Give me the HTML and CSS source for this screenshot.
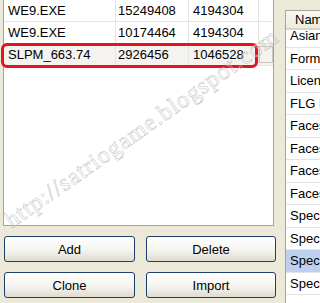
FILE: index.html
```html
<!DOCTYPE html>
<html lang="en">
<head>
    <meta charset="UTF-8">
    <title>Memory card files</title>
    <link rel="stylesheet" href="styles.css">
</head>
<body>
<div class="window">
    <div class="left-pane">
        <div class="file-list">
            <div class="file-row">
                <span class="cell name">WE9.EXE</span>
                <span class="cell size">15249408</span>
                <span class="cell alloc">4194304</span>
                <span class="cell extra"></span>
            </div>
            <div class="file-row">
                <span class="cell name">WE9.EXE</span>
                <span class="cell size">10174464</span>
                <span class="cell alloc">4194304</span>
                <span class="cell extra"></span>
            </div>
            <div class="file-row marked">
                <span class="cell name">SLPM_663.74</span>
                <span class="cell size">2926456</span>
                <span class="cell alloc">1046528</span>
                <span class="cell extra"></span>
            </div>
        </div>
        <div class="buttons">
            <button type="button">Add</button>
            <button type="button">Delete</button>
            <button type="button">Clone</button>
            <button type="button">Import</button>
        </div>
    </div>

    <div class="entry-pane">
        <div class="entry-head">Name</div>
        <div class="entry-body">
            <div class="entry-row clipped">Asian</div>
            <div class="entry-row">Forma</div>
            <div class="entry-row">Licen</div>
            <div class="entry-row">FLG F</div>
            <div class="entry-row">Faces</div>
            <div class="entry-row">Faces</div>
            <div class="entry-row">Faces</div>
            <div class="entry-row">Faces</div>
            <div class="entry-row">Speci</div>
            <div class="entry-row">Speci</div>
            <div class="entry-row selected">Speci</div>
            <div class="entry-row">Speci</div>
        </div>
    </div>
</div>

<div class="watermark">http://satriogame.blogspot.com</div>
</body>
</html>
```

FILE: styles.css
```css
body {
    margin: 0;
    width: 320px;
    height: 303px;
    overflow: hidden;
    position: relative;
    background-color: #ece9d8;
    font-family: "Liberation Sans", Arial, sans-serif;
    font-size: 13px;
    color: #000;
}

.window {
    display: flex;
    align-items: flex-start;
}

.left-pane {
    flex: none;
    width: 271px;
    padding-left: 3px;
}

.file-list {
    height: 226px;
    box-sizing: border-box;
    background-color: #fff;
    border: 1px solid #a5a49c;
    border-top: none;
}

.file-row {
    display: flex;
    height: 22px;
    box-sizing: border-box;
    border-bottom: 1px solid #e4e4e0;
    line-height: 21px;
    position: relative;
}

.cell {
    box-sizing: border-box;
    border-right: 1px solid #e4e4e0;
    white-space: nowrap;
}

.name {
    width: 112px;
    padding-left: 4px;
}

.size {
    width: 73px;
    padding-left: 2px;
}

.alloc {
    width: 70px;
    padding-left: 4px;
}

.extra {
    flex: 1;
    border-right: none;
}

.file-row.marked {
    background-color: #f4f3ef;
}

.file-row.marked .extra {
    margin: 2px 0;
    border: 1px solid #c9c8c0;
}

/* red annotation around the selected save */
.file-row.marked::after {
    content: "";
    position: absolute;
    left: -3px;
    top: -1px;
    width: 257px;
    height: 25px;
    box-sizing: border-box;
    border: 3px solid #e2141c;
    border-radius: 6px;
}

.buttons {
    display: grid;
    grid-template-columns: 131px 130px;
    gap: 10px 11px;
    margin-top: 10px;
    padding-left: 1px;
}

button {
    height: 26px;
    border: 1px solid #1c3f6e;
    border-radius: 3px;
    background: linear-gradient(#ffffff, #f5f4ee 55%, #dedbd0);
    font-family: "Liberation Sans", Arial, sans-serif;
    font-size: 13px;
    color: #000;
    padding: 0;
}

.entry-pane {
    flex: none;
    width: 34px;
    height: 300px;
    margin-left: 11px;
    margin-top: 10px;
    background-color: #fff;
    border: 1px solid #a5a49c;
    border-right: none;
    overflow: hidden;
}

.entry-head {
    height: 19px;
    box-sizing: border-box;
    padding-left: 9px;
    line-height: 18px;
    white-space: nowrap;
    background: linear-gradient(#f9f8f3, #ebeadb);
    border-bottom: 2px solid #d8d5c6;
}

.entry-body {
    height: 280px;
    overflow: hidden;
}

.entry-row {
    height: 22.5px;
    box-sizing: border-box;
    padding-left: 4px;
    line-height: 21.5px;
    border-bottom: 1px solid #e4e4e0;
    white-space: nowrap;
}

.entry-row.clipped {
    margin-top: -5px;
}

.entry-row.selected {
    background-color: #bfd0ef;
}

.watermark {
    position: absolute;
    left: 14px;
    top: 208px;
    font-family: "Liberation Serif", serif;
    font-size: 24px;
    line-height: 24px;
    letter-spacing: 1px;
    white-space: nowrap;
    color: transparent;
    -webkit-text-stroke: 0.5px #c2c2c2;
    transform: rotate(-35deg);
    transform-origin: 0 100%;
    pointer-events: none;
}
```
